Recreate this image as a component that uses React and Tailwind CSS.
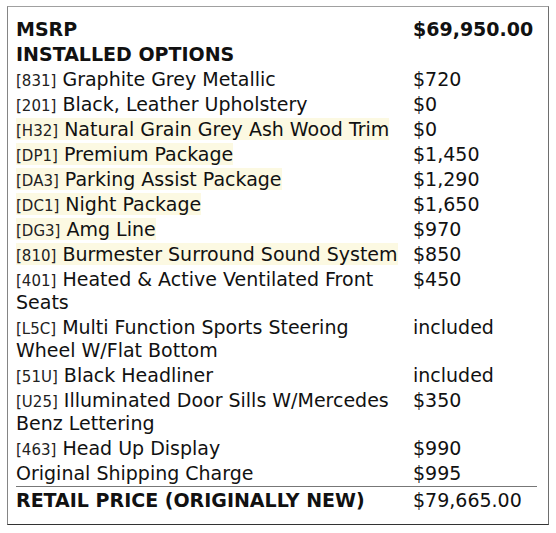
const options = [
  { code: '831', name: 'Graphite Grey Metallic', price: '$720' },
  { code: '201', name: 'Black, Leather Upholstery', price: '$0' },
  { code: 'H32', name: 'Natural Grain Grey Ash Wood Trim', price: '$0', hi: true },
  { code: 'DP1', name: 'Premium Package', price: '$1,450', hi: true },
  { code: 'DA3', name: 'Parking Assist Package', price: '$1,290', hi: true },
  { code: 'DC1', name: 'Night Package', price: '$1,650', hi: true },
  { code: 'DG3', name: 'Amg Line', price: '$970', hi: true },
  { code: '810', name: 'Burmester Surround Sound System', price: '$850', hi: true },
  { code: '401', name: 'Heated & Active Ventilated Front Seats', price: '$450' },
  { code: 'L5C', name: 'Multi Function Sports Steering Wheel W/Flat Bottom', price: 'included' },
  { code: '51U', name: 'Black Headliner', price: 'included' },
  { code: 'U25', name: 'Illuminated Door Sills W/Mercedes Benz Lettering', price: '$350' },
  { code: '463', name: 'Head Up Display', price: '$990' },
];

function Row({ left, right, className = '' }) {
  return (
    <div className={`flex py-px ${className}`}>
      <div className="w-[397px] pr-2">{left}</div>
      <div className="flex-1">{right}</div>
    </div>
  );
}

export default function App() {
  return (
    <div className="min-h-screen bg-white pt-[6px] pl-[7px]" style={{ fontFamily: '"DejaVu Sans", sans-serif' }}>
      <div className="w-[542px] h-[519px] border border-t-[#a0a0a0] border-l-[#858585] border-r-[#6e6e6e] border-b-[#333] pl-2 pr-[11px] pt-[10px] text-[19px] leading-[23px] text-[#111]">
        <Row left={<span className="font-bold">MSRP</span>} right={<span className="font-bold">$69,950.00</span>} />
        <Row left={<span className="font-bold">INSTALLED OPTIONS</span>} />
        {options.map((o) => (
          <Row
            key={o.code}
            left={
              <span className={o.hi ? 'bg-[#fcf9e2]' : ''}>
                <span className="text-[15px] leading-none text-[#222]">[{o.code}]</span> {o.name}
              </span>
            }
            right={o.price}
          />
        ))}
        <Row left="Original Shipping Charge" right="$995" />
        <Row
          className="border-t border-[#777] pt-[2px]"
          left={<span className="font-bold">RETAIL PRICE (ORIGINALLY NEW)</span>}
          right="$79,665.00"
        />
      </div>
    </div>
  );
}
